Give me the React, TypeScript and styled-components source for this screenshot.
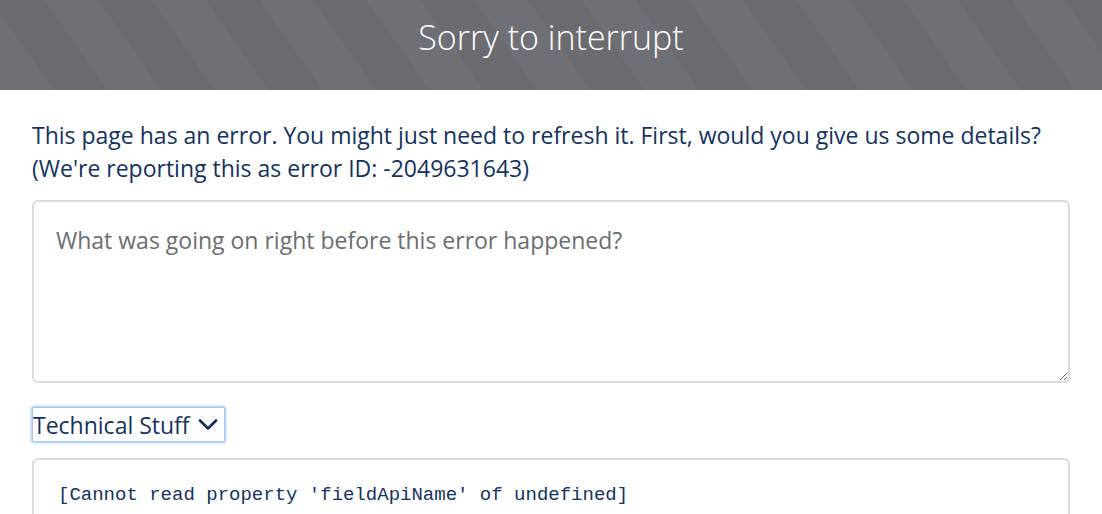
import React from "react";
import styled, { createGlobalStyle } from "styled-components";

const GlobalStyle = createGlobalStyle`
  html, body { margin: 0; padding: 0; background: #ffffff; }
  body { font-family: "Open Sans", "Liberation Sans", sans-serif; }
  * { box-sizing: border-box; }
`;

const Page = styled.div`
  display: flex;
  flex-direction: column;
  width: 1102px;
  height: 514px;
  overflow: hidden;
  background: #ffffff;
`;

const Header = styled.header`
  height: 90px;
  flex: none;
  display: flex;
  align-items: center;
  justify-content: center;
  background-color: #6c6d72;
  background-image: repeating-linear-gradient(
    55deg,
    rgba(255, 255, 255, 0.022) 0px,
    rgba(255, 255, 255, 0.022) 44px,
    rgba(0, 0, 0, 0.012) 44px,
    rgba(0, 0, 0, 0.012) 88px
  );
`;

const Title = styled.h1`
  margin: 0;
  padding-bottom: 16px;
  font-family: "Open Sans", "Liberation Sans", sans-serif;
  font-weight: 300;
  font-size: 34px;
  color: #ffffff;
  letter-spacing: 0;
`;

const Body = styled.main`
  display: flex;
  flex-direction: column;
  padding: 29px 32px 0;
`;

const Message = styled.p`
  margin: 0;
  font-size: 23px;
  line-height: 33px;
  color: #16325c;
`;

const Feedback = styled.textarea`
  display: block;
  margin-top: 15px;
  width: 100%;
  height: 183px;
  padding: 23px 22px 13px;
  border: 2px solid #dddbda;
  border-radius: 6px;
  font-family: "Open Sans", "Liberation Sans", sans-serif;
  font-size: 23px;
  line-height: 30px;
  color: #16325c;
  resize: vertical;
  outline: none;
  &::placeholder { color: #6b6d70; }
`;

const Toggle = styled.button`
  align-self: flex-start;
  display: flex;
  align-items: center;
  gap: 8px;
  margin-top: 24px;
  width: 193px;
  height: 35px;
  padding: 0 6px 0 0;
  background: #ffffff;
  border: 1px solid #a9c8ee;
  box-shadow: 0 0 3px #5a9ee6;
  font-family: "Open Sans", "Liberation Sans", sans-serif;
  font-size: 23px;
  color: #16325c;
  cursor: pointer;
`;

const Stack = styled.pre`
  margin: 16px 0 0;
  padding: 22px 24px;
  border: 2px solid #dddbda;
  border-radius: 6px;
  font-family: "Liberation Mono", "Courier New", monospace;
  font-size: 19px;
  line-height: 26px;
  color: #16325c;
  white-space: pre-wrap;
`;

const Chevron = () => (
  <svg width="20" height="13" viewBox="0 0 20 13" aria-hidden="true">
    <path d="M2 2.5 L10 10.5 L18 2.5" fill="none" stroke="#16325c" strokeWidth="2.8" strokeLinecap="round" strokeLinejoin="round" />
  </svg>
);

export default function App() {
  return (
    <>
      <GlobalStyle />
      <Page>
        <Header>
          <Title>Sorry to interrupt</Title>
        </Header>
        <Body>
          <Message>
            This page has an error. You might just need to refresh it. First, would you give us some details?
            <br />
            (We're reporting this as error ID: -2049631643)
          </Message>
          <Feedback placeholder="What was going on right before this error happened?" />
          <Toggle type="button">
            Technical Stuff
            <Chevron />
          </Toggle>
          <Stack>[Cannot read property 'fieldApiName' of undefined]</Stack>
        </Body>
      </Page>
    </>
  );
}
